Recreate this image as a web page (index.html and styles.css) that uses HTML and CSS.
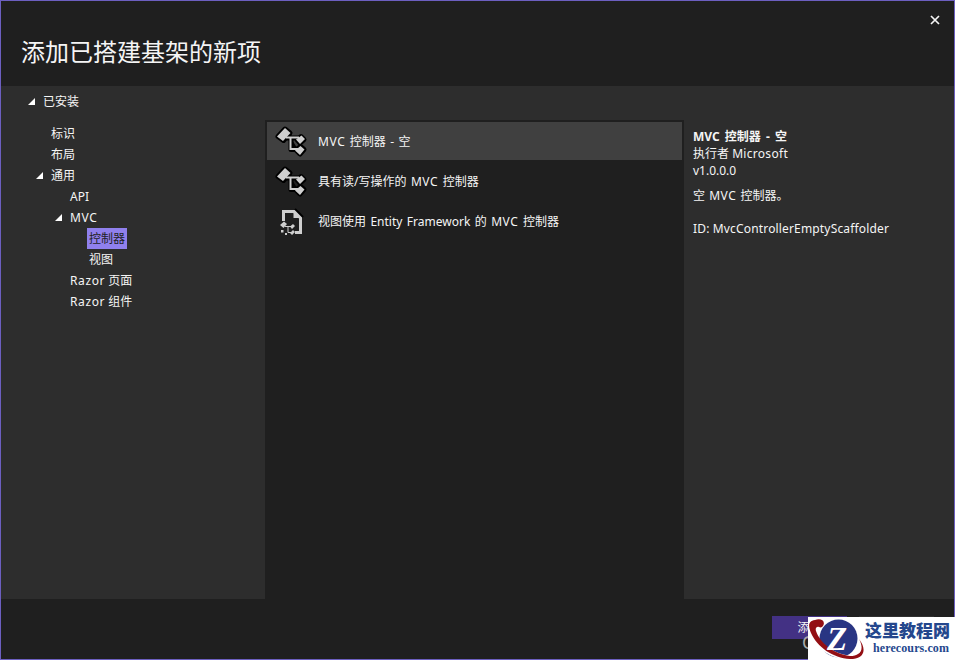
FILE: index.html
```html
<!DOCTYPE html>
<html lang="zh-CN">
<head>
  <meta charset="utf-8">
  <title>添加已搭建基架的新项</title>
  <link rel="stylesheet" href="styles.css">
</head>
<body>
  <svg width="0" height="0" class="defs">
    <defs>
      <g id="controller">
        <path class="edge" d="M5 13.500L12 6L17 10L10.500 17.500ZM14 15H26M18 15V26.500H25M24 16.500L28 13.500L31 16.500L27 20ZM23 27L27.500 23.500L31 26.500L27 31Z"/>
        <path class="shape" d="M4 13.500L12 5L17.500 10L10 18ZM23 16.500L28.500 12.500L32 16L27 21ZM22 27.500L27.500 23L31.500 26.500L27 32Z"/>
        <path class="wire" d="M13 14.500H26M17.500 15V26H25"/>
      </g>
    </defs>
  </svg>
  <div class="window">
    <header class="header">
      <button class="close" aria-label="关闭">
        <svg width="10" height="10" viewBox="0 0 10 10"><path d="M1 1L9 9M9 1L1 9"/></svg>
      </button>
      <h1>添加已搭建基架的新项</h1>
    </header>
    <main class="content">
      <nav class="tree">
        <div class="node root"><i class="arrow"></i><span>已安装</span></div>
        <div class="node level1"><span>标识</span></div>
        <div class="node level1"><span>布局</span></div>
        <div class="node level1"><i class="arrow"></i><span>通用</span></div>
        <div class="node level2"><span>API</span></div>
        <div class="node level2"><i class="arrow"></i><span class="mvc">MVC</span></div>
        <div class="node level3"><span class="selected">控制器</span></div>
        <div class="node level3"><span>视图</span></div>
        <div class="node level2"><span><span class="razor">Razor</span> 页面</span></div>
        <div class="node level2"><span><span class="razor">Razor</span> 组件</span></div>
      </nav>
      <section class="list">
        <div class="item active">
          <svg width="36" height="36" viewBox="0 0 36 36"><use href="#controller"/></svg>
          <p><span class="mvc">MVC</span> 控制器 - 空</p>
        </div>
        <div class="item">
          <svg width="36" height="36" viewBox="0 0 36 36"><use href="#controller"/></svg>
          <p>具有读/写操作的 <span class="mvc">MVC</span> 控制器</p>
        </div>
        <div class="item">
          <svg width="36" height="36" viewBox="0 0 36 36">
            <path class="fold" d="M22 6L30 14"/>
            <path class="page" d="M10.500 18V8.500H21L27.500 15V29.500H22"/>
            <path class="shape" d="M20.500 7V15H28.500Z"/>
            <path class="shape" d="M7 22L11 18.500L14 21L10.500 25ZM17 23.500L20 21L22 23L19 26ZM17 30L20 27L22 29L19 32ZM8 27H10.500V29.500H8ZM12 30H14V32H12Z"/>
            <path class="thin" d="M12 23.500H18M15 24V29.500H18"/>
          </svg>
          <p>视图使用 Entity Framework 的 <span class="mvc">MVC</span> 控制器</p>
        </div>
      </section>
      <aside class="details">
        <p class="name">MVC 控制器 - 空</p>
        <p class="author">执行者 <span>Microsoft</span></p>
        <p>v1.0.0.0</p>
        <p class="summary">空 <span class="mvc">MVC</span> 控制器。</p>
        <p class="id">ID: MvcControllerEmptyScaffolder</p>
      </aside>
    </main>
    <footer class="footer">
      <button class="add">添加</button>
      <button class="cancel" aria-label="取消"></button>
    </footer>
  </div>
  <span class="mark">C</span>
  <div class="watermark">
    <svg width="57" height="43" viewBox="0 0 57 43">
      <circle cx="30.500" cy="21.500" r="19" fill="#293583"/>
      <path d="M7 12C9 24 22 36 43 39L39 42C22 42 7 31 5 16Z" fill="#fff"/>
      <path d="M15 9C18 4 13 1 7 3C0 4 0 9 3 16C9 30 25 41 42 42C55 42 60 34 51 22C57 33 52 39 42 39C26 37 12 26 8 14C7 11 9 9 11 10C13 11 14 10 15 9Z" fill="#930f14"/>
      <text x="19" y="33" class="zed">Z</text>
    </svg>
    <div class="brand"><b>这里教程网</b><span>herecours.com</span></div>
  </div>
</body>
</html>
```
FILE: styles.css
```css
* {
  box-sizing: border-box;
}
body {
  margin: 0;
  overflow: hidden;
  background: #1f1f1f;
  color: #f5f5f5;
  font: 12px/17px "Noto Sans", "Noto Sans CJK SC", sans-serif;
}
button {
  border: 0;
  padding: 0;
  color: inherit;
  font: inherit;
}
p {
  margin: 0;
}
.defs {
  position: absolute;
}
.window {
  display: flex;
  flex-direction: column;
  width: 955px;
  height: 660px;
  border: 1px solid #6c5fc0;
}
.header {
  height: 85px;
  padding: 14px 14px 0 20px;
}
.close {
  display: block;
  width: 10px;
  height: 10px;
  margin-left: auto;
  background: none;
}
.close svg {
  display: block;
  fill: none;
  stroke: #f5f5f5;
  stroke-width: 1.7;
}
h1 {
  margin: 8px 0 0;
  font-family: "Noto Sans CJK SC", sans-serif;
  font-size: 24px;
  font-weight: 400;
  line-height: 36px;
}
.content {
  display: grid;
  grid-template-columns: 264px 419px 1fr;
  height: 513px;
  background: #2d2d2d;
}
.tree {
  padding-top: 5px;
}
.node {
  display: flex;
  align-items: center;
  height: 21px;
}
.node span {
  white-space: nowrap;
}
.arrow {
  width: 7px;
  height: 7px;
  margin: 0 8px 0 -15px;
  background: #fff;
  clip-path: polygon(100% 0, 100% 100%, 0 100%);
}
.root {
  margin-bottom: 11px;
  padding-left: 42px;
}
.level1 {
  padding-left: 50px;
}
.level2 {
  padding-left: 69px;
}
.level3 {
  padding-left: 86px;
}
.level3 span {
  padding: 0 2px;
}
.mvc {
  letter-spacing: 0.6px;
}
.razor {
  letter-spacing: 0.6px;
}
.selected {
  height: 21px;
  line-height: 21px;
  background: #9080ed;
  color: #1f1f1f;
}
.list {
  margin-top: 34px;
  padding: 2px;
  background: #1f1f1f;
}
.item {
  display: flex;
  align-items: center;
  height: 38px;
  margin-bottom: 2px;
  padding-left: 6px;
}
.item p {
  margin-left: 9px;
  word-spacing: 1.3px;
}
.active {
  background: #404040;
}
.shape {
  fill: #cfcfcf;
}
.edge {
  fill: #000;
  stroke: #000;
  stroke-width: 5;
  stroke-linejoin: round;
}
.wire,
.thin,
.page {
  fill: none;
  stroke: #cfcfcf;
  stroke-width: 2;
}
.thin {
  stroke-width: 1;
}
.page {
  stroke-width: 3;
}
.fold {
  stroke: #000;
  stroke-width: 2;
}
.details {
  padding: 42px 0 0 9px;
}
.details .name {
  font-weight: 700;
  word-spacing: 2px;
}
.details .author span {
  letter-spacing: 0.3px;
}
.details .summary {
  margin: 8px 0 16px;
  word-spacing: 1px;
}
.details .id {
  letter-spacing: 0.16px;
}
.footer {
  display: flex;
  gap: 12px;
  padding: 17px 0 0 771px;
}
.footer button {
  width: 75px;
  height: 23px;
  background: #433184;
}
.footer .cancel {
  background: #303030;
}
.mark {
  position: absolute;
  left: 802px;
  top: 632px;
  color: #aaa;
  font-size: 18px;
  line-height: 20px;
}
.watermark {
  position: absolute;
  left: 808px;
  top: 617px;
  display: flex;
  width: 147px;
  height: 43px;
  background: #fff;
  color: #24478d;
}
.brand {
  padding: 1px 0 0;
  white-space: nowrap;
}
.brand b {
  display: block;
  font: 900 17px/24px "Noto Sans CJK SC", sans-serif;
}
.brand span {
  display: block;
  margin: -1px 0 0 8px;
  font: 700 12px/14px "Liberation Serif", serif;
  letter-spacing: 0.1px;
}
.zed {
  fill: #fff;
  font: italic 700 33px "Liberation Serif", serif;
}
```
